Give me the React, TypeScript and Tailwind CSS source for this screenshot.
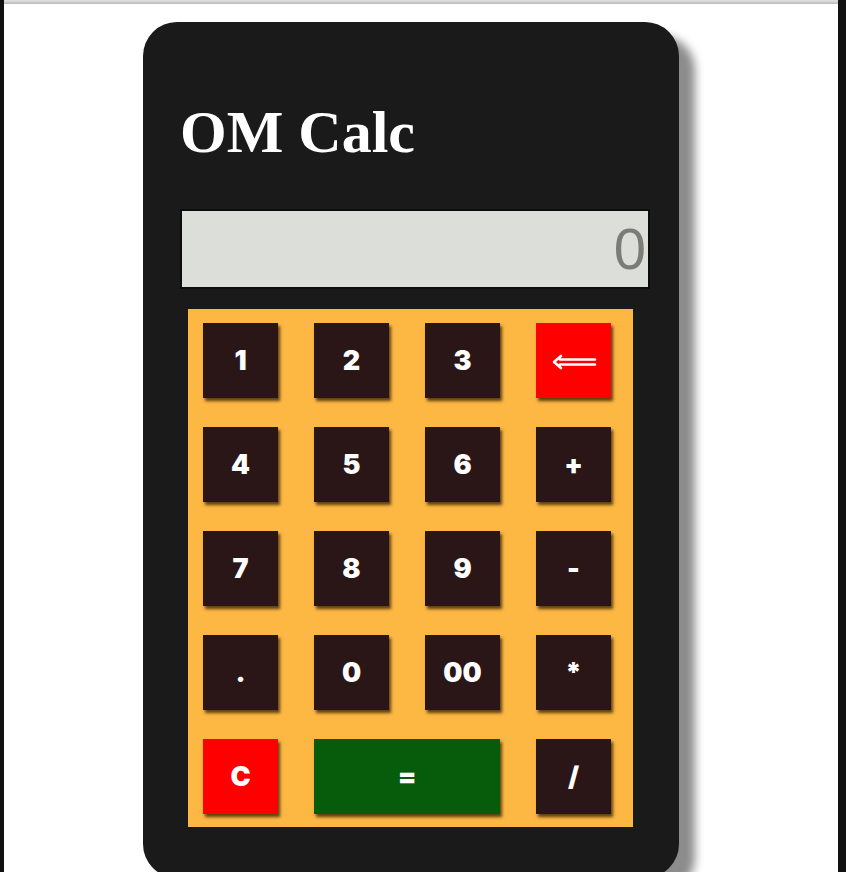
const keys = [
  { label: "1" },
  { label: "2" },
  { label: "3" },
  { label: "⇐", kind: "red", arrow: true },
  { label: "4" },
  { label: "5" },
  { label: "6" },
  { label: "+" },
  { label: "7" },
  { label: "8" },
  { label: "9" },
  { label: "-" },
  { label: "." },
  { label: "0" },
  { label: "00" },
  { label: "*" },
  { label: "C", kind: "red" },
  { label: "=", kind: "green", wide: true },
  { label: "/" },
];

function Key({ label, kind, wide, arrow }: { label: string; kind?: string; wide?: boolean; arrow?: boolean }) {
  const bg =
    kind === "red" ? "bg-[#ff0000]" : kind === "green" ? "bg-[#065c0a]" : "bg-[#2a1617]";
  return (
    <button
      className={`${bg} ${wide ? "col-span-2" : ""} h-[75px] flex items-center justify-center pt-[2px] text-white shadow-[2px_3px_3px_rgba(40,20,0,0.75)] font-['Inter',sans-serif] font-black text-[27px]`}
    >
      {arrow ? (
        <svg width="46" height="16" viewBox="0 0 46 16" fill="none" stroke="white" strokeWidth="2.6" strokeLinecap="round" strokeLinejoin="round">
          <path d="M44 5.5H9M44 10.5H9M10 2L3 8l7 6" />
        </svg>
      ) : (
        label
      )}
    </button>
  );
}

export default function App() {
  return (
    <div className="h-[872px] w-[846px] flex overflow-hidden bg-white">
      <div className="w-[4px] shrink-0 bg-[#111111]" />
      <div className="flex-1 flex flex-col">
        <div className="h-[4px] shrink-0 bg-linear-to-b from-[#e4e4e4] to-[#b9b9b9]" />
        <div className="mt-[18px] ml-[139px] w-[536px] h-[856px] shrink-0 rounded-[34px] bg-[#1a1a1a] shadow-[16px_14px_10px_#8c8c8c] pt-[80px] pl-[37px]">
          {/* Title */}
          <h1 className="font-['Liberation_Serif',serif] font-bold text-6xl leading-none text-white">
            OM Calc
          </h1>

          {/* Display */}
          <div className="mt-[47px] w-[470px] h-[80px] border-2 border-[#0c0c0c] bg-[#dcdfd9] flex items-center justify-end pr-[2px]">
            <span className="font-['Liberation_Sans',sans-serif] text-[58px] leading-none text-[#7b7c76]">0</span>
          </div>

          {/* Keypad */}
          <div className="mt-[20px] ml-[8px] w-[445px] bg-[#fdb843] pt-[14px] pl-[15px] pr-[22px] pb-[13px] grid grid-cols-[repeat(4,75px)] gap-x-[36px] gap-y-[29px]">
            {keys.map((k, i) => (
              <Key key={i} {...k} />
            ))}
          </div>
        </div>
      </div>
      <div className="w-[8px] shrink-0 bg-[#111111]" />
    </div>
  );
}
